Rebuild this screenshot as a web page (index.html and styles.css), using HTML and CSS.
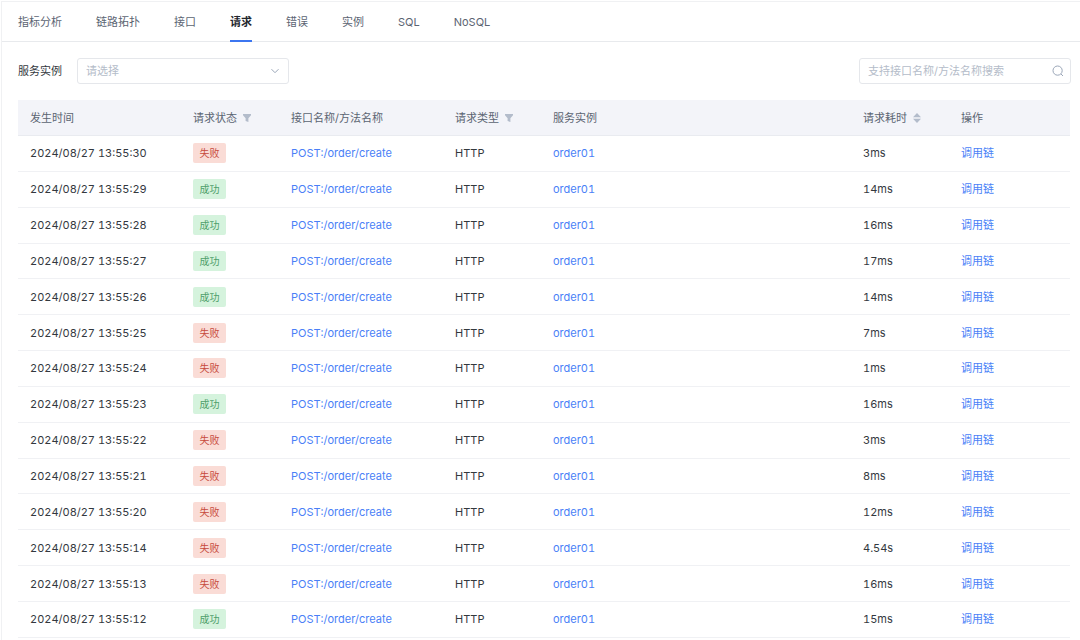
FILE: index.html
```html
<!DOCTYPE html>
<html lang="zh-CN">
<head>
  <meta charset="UTF-8" />
  <meta name="viewport" content="width=device-width, initial-scale=1" />
  <title>请求</title>
  <link rel="stylesheet" href="styles.css">
</head>
<body>
  <main class="panel">
    <nav class="tabs">
      <a href="#metrics">指标分析</a>
      <a href="#topology">链路拓扑</a>
      <a href="#api">接口</a>
      <a href="#request" class="active">请求</a>
      <a href="#error">错误</a>
      <a href="#instance">实例</a>
      <a href="#sql">SQL</a>
      <a href="#nosql">NoSQL</a>
    </nav>

    <form class="toolbar">
      <label for="instance">服务实例</label>
      <div class="field">
        <select id="instance" name="instance">
          <option value="" selected>请选择</option>
          <option value="order01">order01</option>
        </select>
        <svg class="chevron" viewBox="0 0 10 10"><path d="M1.5 3.2 L5 6.7 L8.5 3.2" /></svg>
      </div>
      <div class="field search">
        <input type="text" id="keyword" name="keyword" aria-label="搜索" placeholder="支持接口名称/方法名称搜索" />
        <svg class="magnifier" viewBox="0 0 12 12"><circle cx="5.6" cy="5.6" r="4.6" /><path d="M9 9 L11 11" /></svg>
      </div>
    </form>

    <div class="table-wrap">
      <table>
        <colgroup>
          <col class="col-time" />
          <col class="col-status" />
          <col class="col-api" />
          <col class="col-type" />
          <col />
          <col class="col-cost" />
          <col class="col-action" />
        </colgroup>
        <thead>
          <tr>
            <th>发生时间</th>
            <th>请求状态<svg class="filter" viewBox="0 0 8 8"><path d="M0 0 H8 V1.2 L5.4 4.2 V8 L2.6 7 V4.2 L0 1.2 Z" /></svg></th>
            <th>接口名称/方法名称</th>
            <th>请求类型<svg class="filter" viewBox="0 0 8 8"><path d="M0 0 H8 V1.2 L5.4 4.2 V8 L2.6 7 V4.2 L0 1.2 Z" /></svg></th>
            <th>服务实例</th>
            <th>请求耗时<svg class="sorter" viewBox="0 0 8 10"><path d="M4 0 L8 4.3 H0 Z M0 5.7 H8 L4 10 Z" /></svg></th>
            <th>操作</th>
          </tr>
        </thead>
        <tbody>
          <tr><td>2024/08/27 13:55:30</td><td><span class="tag fail">失败</span></td><td><a href="#">POST:/order/create</a></td><td>HTTP</td><td><a href="#">order01</a></td><td>3ms</td><td><a href="#">调用链</a></td></tr>
          <tr><td>2024/08/27 13:55:29</td><td><span class="tag ok">成功</span></td><td><a href="#">POST:/order/create</a></td><td>HTTP</td><td><a href="#">order01</a></td><td>14ms</td><td><a href="#">调用链</a></td></tr>
          <tr><td>2024/08/27 13:55:28</td><td><span class="tag ok">成功</span></td><td><a href="#">POST:/order/create</a></td><td>HTTP</td><td><a href="#">order01</a></td><td>16ms</td><td><a href="#">调用链</a></td></tr>
          <tr><td>2024/08/27 13:55:27</td><td><span class="tag ok">成功</span></td><td><a href="#">POST:/order/create</a></td><td>HTTP</td><td><a href="#">order01</a></td><td>17ms</td><td><a href="#">调用链</a></td></tr>
          <tr><td>2024/08/27 13:55:26</td><td><span class="tag ok">成功</span></td><td><a href="#">POST:/order/create</a></td><td>HTTP</td><td><a href="#">order01</a></td><td>14ms</td><td><a href="#">调用链</a></td></tr>
          <tr><td>2024/08/27 13:55:25</td><td><span class="tag fail">失败</span></td><td><a href="#">POST:/order/create</a></td><td>HTTP</td><td><a href="#">order01</a></td><td>7ms</td><td><a href="#">调用链</a></td></tr>
          <tr><td>2024/08/27 13:55:24</td><td><span class="tag fail">失败</span></td><td><a href="#">POST:/order/create</a></td><td>HTTP</td><td><a href="#">order01</a></td><td>1ms</td><td><a href="#">调用链</a></td></tr>
          <tr><td>2024/08/27 13:55:23</td><td><span class="tag ok">成功</span></td><td><a href="#">POST:/order/create</a></td><td>HTTP</td><td><a href="#">order01</a></td><td>16ms</td><td><a href="#">调用链</a></td></tr>
          <tr><td>2024/08/27 13:55:22</td><td><span class="tag fail">失败</span></td><td><a href="#">POST:/order/create</a></td><td>HTTP</td><td><a href="#">order01</a></td><td>3ms</td><td><a href="#">调用链</a></td></tr>
          <tr><td>2024/08/27 13:55:21</td><td><span class="tag fail">失败</span></td><td><a href="#">POST:/order/create</a></td><td>HTTP</td><td><a href="#">order01</a></td><td>8ms</td><td><a href="#">调用链</a></td></tr>
          <tr><td>2024/08/27 13:55:20</td><td><span class="tag fail">失败</span></td><td><a href="#">POST:/order/create</a></td><td>HTTP</td><td><a href="#">order01</a></td><td>12ms</td><td><a href="#">调用链</a></td></tr>
          <tr><td>2024/08/27 13:55:14</td><td><span class="tag fail">失败</span></td><td><a href="#">POST:/order/create</a></td><td>HTTP</td><td><a href="#">order01</a></td><td>4.54s</td><td><a href="#">调用链</a></td></tr>
          <tr><td>2024/08/27 13:55:13</td><td><span class="tag fail">失败</span></td><td><a href="#">POST:/order/create</a></td><td>HTTP</td><td><a href="#">order01</a></td><td>16ms</td><td><a href="#">调用链</a></td></tr>
          <tr><td>2024/08/27 13:55:12</td><td><span class="tag ok">成功</span></td><td><a href="#">POST:/order/create</a></td><td>HTTP</td><td><a href="#">order01</a></td><td>15ms</td><td><a href="#">调用链</a></td></tr>
        </tbody>
      </table>
    </div>
  </main>
</body>
</html>
```
FILE: styles.css
```css
* { box-sizing: border-box; margin: 0; padding: 0; }
body {
  font-family: Inter, "Noto Sans CJK SC", sans-serif;
  font-size: 11px;
  line-height: 16px;
  color: #33383e;
  background: #fff;
}
a {
  color: #4a7ff7;
  text-decoration: none;
}
.panel {
  margin: 1px 0 0 1px;
  border-top: 1px solid #f0f1f3;
  border-left: 1px solid #f0f1f3;
  min-height: calc(100vh - 1px);
}

/* tabs */
.tabs {
  display: flex;
  gap: 34px;
  height: 40px;
  padding: 0 16px;
  border-bottom: 1px solid #e8eaed;
}
.tabs a {
  height: 40px;
  line-height: 40px;
  color: #5b6472;
}
.tabs a.active {
  color: #23272e;
  font-weight: 700;
  border-bottom: 2px solid #3c76f0;
}

/* filter row */
.toolbar {
  display: flex;
  align-items: center;
  padding: 16px 9px 16px 16px;
}
.toolbar label {
  margin-right: 15px;
  color: #33383e;
}
.field {
  position: relative;
  width: 212px;
}
.search {
  margin-left: auto;
}
.field select,
.field input {
  display: block;
  width: 100%;
  height: 26px;
  padding: 0 28px 0 8px;
  border: 1px solid #e5e7eb;
  border-radius: 3px;
  background: #fff;
  font: inherit;
  color: #b4bcc9;
  appearance: none;
  outline: none;
}
.field input::placeholder {
  color: #b4bcc9;
}
.field svg {
  position: absolute;
  fill: none;
  stroke: #9aa6b8;
  pointer-events: none;
}
.chevron {
  top: 8px;
  right: 9px;
  width: 10px;
  height: 10px;
}
.magnifier {
  top: 7px;
  right: 7px;
  width: 12px;
  height: 12px;
}

/* request list */
.table-wrap {
  padding: 0 10px 0 16px;
}
table {
  width: 100%;
  height: 538px;
  table-layout: fixed;
  border-collapse: separate;
  border-spacing: 0;
  font-variant-numeric: tabular-nums;
}
.col-time { width: 163px; }
.col-status, .col-type, .col-cost { width: 98px; }
.col-api { width: 164px; }
.col-action { width: 121px; }
th, td {
  padding: 0 12px;
  text-align: left;
  vertical-align: middle;
  white-space: nowrap;
  border-bottom: 1px solid #f0f1f4;
}
th {
  height: 36px;
  font-weight: 400;
  color: #5b6472;
  background: #f3f4f9;
  border-bottom-color: #e9ebf0;
}
.filter, .sorter {
  width: 8px;
  margin-left: 6px;
  fill: #b3bccb;
}
.filter {
  height: 8px;
}
.sorter {
  height: 10px;
  vertical-align: -1px;
}
.tag {
  display: block;
  width: 33px;
  height: 20px;
  line-height: 20px;
  border-radius: 2px;
  font-size: 10px;
  text-align: center;
}
.fail {
  color: #c74a3c;
  background: #fadcd6;
}
.ok {
  color: #4f9f6b;
  background: #d5f3dd;
}
```
